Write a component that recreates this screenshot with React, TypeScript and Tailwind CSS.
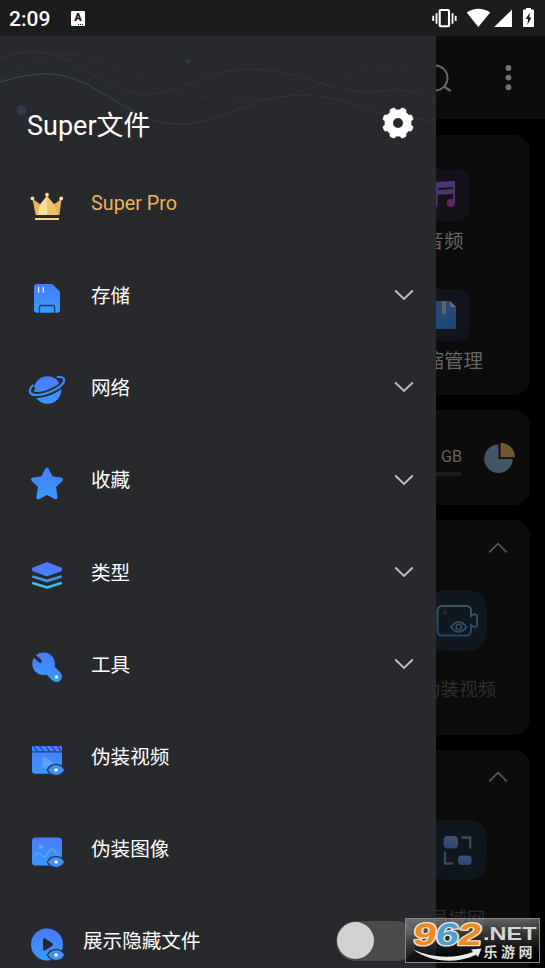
import React from 'react';

type IconName = 'crown' | 'storage' | 'network' | 'star' | 'layers' | 'wrench' | 'video' | 'image' | 'play';

interface MenuItem {
  icon: IconName;
  label: string;
  expandable?: boolean;
  gold?: boolean;
}

const menuItems: MenuItem[] = [
  { icon: 'crown', label: 'Super Pro', gold: true },
  { icon: 'storage', label: '存储', expandable: true },
  { icon: 'network', label: '网络', expandable: true },
  { icon: 'star', label: '收藏', expandable: true },
  { icon: 'layers', label: '类型', expandable: true },
  { icon: 'wrench', label: '工具', expandable: true },
  { icon: 'video', label: '伪装视频' },
  { icon: 'image', label: '伪装图像' },
];

// Small eye badge shared by the "hidden content" icons
const EyeBadge = () => (
  <g>
    <path d="M17.500 28c2.400-4.200 5.600-6.300 9.500-6.300s7.100 2.100 9.500 6.300c-2.400 4.200-5.600 6-9.500 6s-7.100-1.800-9.500-6z" fill="#24304a" />
    <path d="M19 28c2.200-3.300 4.900-4.900 8.100-4.900s5.900 1.600 8.100 4.900c-2.200 3.300-4.900 4.900-8.100 4.900S21.200 31.300 19 28z" fill="#4590f5" />
    <circle cx="27.100" cy="28" r="1.800" fill="#f4faff" />
  </g>
);

const MenuIcon: React.FC<{ name: IconName }> = ({ name }) => {
  const fill = `url(#grad-${name})`;
  return (
    <svg viewBox="0 0 36 36" className="h-9 w-9 shrink-0 overflow-visible">
      <defs>
        <linearGradient id={`grad-${name}`} x1="0" y1="3" x2="0" y2="33" gradientUnits="userSpaceOnUse">
          <stop offset="0" stopColor="#497aff" />
          <stop offset="1" stopColor="#369cff" />
        </linearGradient>
      </defs>
      {name === 'crown' && (
        <g>
          <path d="M3.500 10l7.800 5.300L18 7l7 8.300 7.500-5.300-2 15.200a1 1 0 0 1-1 .8H7.500a1 1 0 0 1-1-.8z" fill="#e8b45a" />
          <path d="M11.300 15.300L18 7v19H8z" fill="#fbdc98" />
          <path d="M18 7l7 8.300L28.500 26H18z" fill="#f1c26c" />
          <circle cx="3.500" cy="9.400" r="1.900" fill="#fbe0a8" />
          <circle cx="18" cy="5.700" r="1.900" fill="#fbe0a8" />
          <circle cx="32.200" cy="9.400" r="1.900" fill="#fbe0a8" />
          <rect x="6" y="29" width="24" height="2" rx=".6" fill="#fbd487" />
        </g>
      )}
      {name === 'storage' && (
        <g>
          <path d="M8 3h15.200L31 10.700v18a3 3 0 0 1-3 3H8a3 3 0 0 1-3-3V6a3 3 0 0 1 3-3z" fill={fill} />
          <path d="M9.600 6.500v4.700M14.300 6.500v4.700" stroke="#e3efff" strokeWidth="1.300" strokeLinecap="round" />
          <path d="M10.500 32v-6.200a1.300 1.300 0 0 1 1.300-1.300h12.500a1.300 1.300 0 0 1 1.300 1.300V32" fill="none" stroke="#203960" strokeWidth="1.300" />
        </g>
      )}
      {name === 'network' && (
        <g>
          <circle cx="18.500" cy="17" r="13.700" fill={fill} />
          <path d="M4.500 13.300C-.5 18 .3 22 7.500 22 19 21.800 35.500 13.500 35 6.800 34.900 4.500 32 4 29 4.600" fill="none" stroke="#28292d" strokeWidth="6" />
          <path d="M3.800 12.500C-1 17.500 0 22 7.300 22 19 21.800 35.600 13.500 35.200 6.800 35 4.300 32 3.400 28.600 4" fill="none" stroke={fill} strokeWidth="2.200" strokeLinecap="round" />
        </g>
      )}
      {name === 'star' && (
        <path
          d="M18 3.500l4.200 8.700 9.700 1.300-7 6.700 1.700 11L18 26.800 9.400 31.200l1.700-11-7-6.700 9.700-1.300z"
          fill={fill}
          stroke={fill}
          strokeWidth="4"
          strokeLinejoin="round"
        />
      )}
      {name === 'layers' && (
        <g strokeLinejoin="round" strokeLinecap="round">
          <path d="M18 5.300l13.700 5.200v1.600L18 17.100 4.300 12.100v-1.600z" fill="#4a7dff" stroke="#4a7dff" strokeWidth="2.400" />
          <path d="M4.300 18.800L18 22.900l13.700-4.100" fill="none" stroke="#4093ee" strokeWidth="2.700" />
          <path d="M4.300 25.200L18 29.500l13.700-4.300" fill="none" stroke="#36c2e8" strokeWidth="2.700" />
        </g>
      )}
      {name === 'wrench' && (
        <g>
          <circle cx="14.600" cy="13.800" r="11.300" fill={fill} />
          <path d="M16 15l11.300 11.500" stroke={fill} strokeWidth="11.200" strokeLinecap="round" />
          <path d="M3.500 4.200l7.800 7" stroke="#28292d" strokeWidth="3.200" strokeLinecap="round" />
          <circle cx="27.600" cy="27" r="1.700" fill="#eef7ff" />
        </g>
      )}
      {name === 'video' && (
        <g>
          <path d="M3 4h30v24.700a3 3 0 0 1-3 3H6a3 3 0 0 1-3-3z" fill={fill} />
          <path d="M3 9.900h30" stroke="#253d70" strokeWidth="1.200" />
          <path d="M4.500 4l4 5.500M10.500 4l4 5.500M16.500 4l4 5.500M22.500 4l4 5.500M28.500 4l4 5.500" stroke="#253d70" strokeWidth="1.200" />
          <path d="M13.500 16.300c0-1.200 1-1.700 2-1.100l7.500 4.400c1 .6 1 1.700 0 2.300l-7.500 4.300c-1 .6-2 0-2-1.100z" fill="#70a5ff" opacity=".8" />
          <EyeBadge />
        </g>
      )}
      {name === 'image' && (
        <g>
          <rect x="3" y="3.500" width="30" height="28" rx="3.500" fill={fill} />
          <circle cx="12" cy="13" r="2.100" fill="#79abff" opacity=".8" />
          <path d="M5.500 22c3-4 5.500-3.200 7.500-.5 2.700 2.500 4.300 1.200 6-2.500 2.500-5.500 5.500-5.500 8 0 1 1.800 2 3.200 4 4" fill="none" stroke="#6ba8fc" strokeWidth="1.200" strokeLinecap="round" />
          <EyeBadge />
        </g>
      )}
      {name === 'play' && (
        <g>
          <circle cx="18" cy="17.400" r="16" fill={fill} />
          <path d="M14 13.100c0-1.700 1.200-2.300 2.500-1.400l6.600 4.400c1.200.8 1.200 2 0 2.800l-6.600 4.300c-1.300.9-2.500.3-2.500-1.400z" fill="#28292d" />
          <EyeBadge />
        </g>
      )}
    </svg>
  );
};

const StatusBar = () => (
  <header className="flex h-9 shrink-0 items-center bg-[#1c1c1d] pl-[9px] pr-2 text-white">
    <span className="w-[62px] pt-0.5 text-[21px] font-medium leading-none">2:09</span>
    <span className="relative flex h-[15px] w-[14px] items-center justify-center rounded-[1px] bg-white pb-px text-[11px] font-black leading-none text-[#1c1c1d]">
      A
      <span className="absolute bottom-px right-0.5 flex gap-px">
        <i className="size-px bg-[#1c1c1d]" />
        <i className="size-px bg-[#1c1c1d]" />
        <i className="size-px bg-[#1c1c1d]" />
      </span>
    </span>
    <svg viewBox="0 0 106 20" className="ml-auto h-5 w-[106px]" fill="#fff">
      <path d="M2.200 7.700v5.300M5.500 5.200v10.500M21.500 5.200v10.500M24.700 7.700v5.300" stroke="#fff" strokeWidth="1.800" />
      <rect x="8.700" y="2" width="9.300" height="16.300" rx="1" fill="none" stroke="#fff" strokeWidth="2.100" />
      <path d="M35.700 4.500Q47.300-3 59.200 4.500L47.300 19zM81 1.500V19H63.200z" />
      <path d="M95 -.5h5v2h2.200a.8.800 0 0 1 .8.800v15.900a.8.800 0 0 1-.8.800h-9.400a.8.800 0 0 1-.8-.8V2.300a.8.800 0 0 1 .8-.8H95z" />
      <path d="M99 4.500l-4.300 6.500h2.400l-.7 6 4-7.500h-2.200z" fill="#1c1c1d" />
    </svg>
  </header>
);

const gearTeeth = [22.5, 67.5, 112.5, 157.5, 202.5, 247.5, 292.5, 337.5];

const DrawerHeader = () => (
  <div className="relative flex h-[121px] shrink-0 items-center justify-between pl-[27px] pr-[22px] pt-[56px]">
    <svg viewBox="0 0 436 121" className="absolute inset-0 h-full w-full" fill="none" strokeWidth="1">
      <defs>
        <linearGradient id="wave" x1="0" x2="436" y1="0" y2="0" gradientUnits="userSpaceOnUse">
          <stop offset="0" stopColor="#323640" />
          <stop offset=".3" stopColor="#30333a" />
          <stop offset="1" stopColor="#323337" />
        </linearGradient>
        <linearGradient id="wave-blue" x1="0" x2="436" y1="0" y2="0" gradientUnits="userSpaceOnUse">
          <stop offset="0" stopColor="#314e65" />
          <stop offset=".25" stopColor="#32465a" />
          <stop offset=".45" stopColor="#34373e" />
          <stop offset="1" stopColor="#303135" />
        </linearGradient>
      </defs>
      <path d="M0 21C35 12 56 16 82 32C112 50 125 58 145 58.500C185 58.500 200 33 250 33.500C300 34 330 56 370 56C390 55 405 49 436 63" stroke="url(#wave)" />
      <path d="M0 44C50 8 86 16 128 35C175 56 190 64 250 64C310 65 320 32 400 32Q423 33 436 41" stroke="url(#wave)" opacity=".65" />
      <path d="M0 46C46 32 68 37 97 54C127 70 144 88 181 88C220 88 250 60 300 59C350 59 378 84 436 84" stroke="url(#wave-blue)" />
      <circle cx="21.500" cy="74" r="4.800" fill="#303b50" />
      <circle cx="187.500" cy="25.300" r="2.500" fill="#2c3641" />
    </svg>
    <h1 className="relative pt-1 text-[27px] leading-none text-white">Super文件</h1>
    <svg viewBox="0 0 32 32" className="relative -mt-1 h-8 w-8" fill="#fff">
      <circle cx="16" cy="16" r="9.200" fill="none" stroke="#fff" strokeWidth="8.400" />
      {gearTeeth.map((angle) => (
        <path
          key={angle}
          d="M12.500 4.500L13.400 1.200Q13.800.5 14.500.5h3q.7 0 1.100.7l.9 3.300z"
          stroke="#fff"
          strokeWidth=".6"
          transform={`rotate(${angle} 16 16)`}
        />
      ))}
    </svg>
  </div>
);

const Chevron = () => (
  <svg viewBox="0 0 20 12" className="ml-auto h-3 w-5" fill="none" stroke="#bebebf" strokeWidth="1.900">
    <path d="M1.200 1.500L10 10l8.800-8.500" />
  </svg>
);

const CollapseIcon = () => (
  <svg viewBox="0 0 20 12" className="ml-[52px] h-3 w-5" fill="none" stroke="#5a5a5a" strokeWidth="1.700">
    <path d="M1.200 10.400L10 1.700l8.800 8.700" />
  </svg>
);

const DrawerRow: React.FC<{ item: MenuItem }> = ({ item }) => (
  <li className="relative flex h-[92.200px] items-center pl-[29px] pr-[22px]">
    <span className="pt-2">
      <MenuIcon name={item.icon} />
    </span>
    <span
      className={
        item.gold
          ? 'ml-[26px] pt-[2px] text-[19.800px] text-[#e9b45c]'
          : 'ml-[26px] pt-[3px] text-[19.600px] text-white'
      }
    >
      {item.label}
    </span>
    {item.expandable && <Chevron />}
    <i className="absolute -bottom-px left-[25px] h-px w-[385px] bg-[#2e2e30]" />
  </li>
);

const Drawer = () => (
  <aside className="flex w-[436px] shrink-0 flex-col overflow-hidden bg-[#28292d]">
    <DrawerHeader />
    <ul>
      {menuItems.map((item) => (
        <DrawerRow key={item.label} item={item} />
      ))}
    </ul>
    <div className="flex h-[92.200px] shrink-0 items-center pl-[29px] pr-5">
      <span className="pt-2">
        <MenuIcon name="play" />
      </span>
      <span className="ml-[18px] pt-[3px] text-[19.600px] text-white">展示隐藏文件</span>
      <span className="ml-auto flex h-10 w-20 items-center rounded-full bg-[#4a4a4b] pl-px">
        <i className="size-[37px] rounded-full bg-[#d2d2d2]" />
      </span>
    </div>
  </aside>
);

// The file manager home, dimmed behind the open drawer
const HomePage = () => (
  <main className="flex w-[109px] shrink-0 flex-col overflow-hidden bg-black">
    <div className="flex h-[83px] shrink-0 items-center bg-[#0c0c0c]">
      <svg viewBox="0 0 109 83" className="h-[83px] w-[109px]" fill="none">
        <circle cx="-1" cy="42" r="12.500" stroke="#686868" strokeWidth="2" />
        <path d="M7.500 50l7 5" stroke="#686868" strokeWidth="2.300" />
        <circle cx="72.500" cy="32" r="2.900" fill="#747474" />
        <circle cx="72.500" cy="41.600" r="2.900" fill="#747474" />
        <circle cx="72.500" cy="51.200" r="2.900" fill="#747474" />
      </svg>
    </div>

    <section className="mt-4 h-[260px] w-[94px] shrink-0 rounded-r-[16px] bg-[#0c0c0c] pt-[34px]">
      <div className="-ml-[52px] flex w-[120px] flex-col items-center text-[19.500px] leading-none text-[#666]">
        <div className="size-[52px] rounded-xl bg-[#15111b]">
          <svg viewBox="0 0 52 52" className="h-full w-full">
            <defs>
              <linearGradient id="music" x1="0" y1="12" x2="0" y2="38" gradientUnits="userSpaceOnUse">
                <stop offset="0" stopColor="#443a74" />
                <stop offset="1" stopColor="#632766" />
              </linearGradient>
            </defs>
            <path d="M17 14.200Q17 13 18.200 12.900L36 12q1 0 1 1v21h-2V25l-15.500.8V37H17zM20.500 19v2l14.500-1v-2z" fill="url(#music)" fillRule="evenodd" />
            <circle cx="32.800" cy="34" r="4" fill="#632766" />
            <circle cx="15" cy="36" r="4" fill="#632766" />
          </svg>
        </div>
        <span className="mt-[11px]">音频</span>
        <div className="mt-[37px] size-[52px] rounded-xl bg-[#11161c]">
          <svg viewBox="0 0 52 52" className="h-full w-full">
            <defs>
              <linearGradient id="zip" x1="0" y1="12" x2="0" y2="40" gradientUnits="userSpaceOnUse">
                <stop offset="0" stopColor="#304675" />
                <stop offset="1" stopColor="#184a7c" />
              </linearGradient>
            </defs>
            <path d="M15 12h17l6 6v20a2 2 0 0 1-2 2H15z" fill="url(#zip)" />
            <path d="M32 12l6 6h-4a2 2 0 0 1-2-2z" fill="#626d83" />
            <path d="M26 12v13" stroke="#66676b" strokeWidth="3.800" strokeDasharray="2 .3" />
          </svg>
        </div>
        <span className="mt-[11px] whitespace-nowrap">压缩管理</span>
      </div>
    </section>

    <section className="mt-[15px] flex h-[95px] w-[94px] shrink-0 items-center rounded-r-[16px] bg-[#0c0c0c]">
      <div className="w-[26px] pt-1.5 text-right">
        <span className="block origin-right scale-x-95 text-[17px] leading-5 text-[#646464]">GB</span>
        <i className="mt-[6px] block h-1 rounded-r-full bg-[#1c1c1c]" />
      </div>
      <svg viewBox="0 0 32 32" className="ml-[22px] size-8">
        <path d="M14.500 2.500A14.300 14.300 0 1 0 28.800 17H14.500z" fill="#435463" />
        <path d="M16.500 .7a14.500 14.500 0 0 1 14.500 14.500H16.500z" fill="#705932" />
      </svg>
    </section>

    <section className="mt-[15px] h-[215px] w-[94px] shrink-0 rounded-r-[16px] bg-[#0c0c0c] pt-[22px]">
      <CollapseIcon />
      <div className="-ml-[39px] mt-9 flex w-[120px] flex-col items-center text-[18.600px] leading-none text-[#2e2e2e]">
        <div className="h-[61px] w-[60px] rounded-[18px] bg-[#10171f]">
          <svg viewBox="0 0 60 61" className="h-full w-full" fill="none">
            <defs>
              <linearGradient id="camera" x1="0" y1="15" x2="0" y2="46" gradientUnits="userSpaceOnUse">
                <stop offset="0" stopColor="#3c5857" />
                <stop offset="1" stopColor="#25436d" />
              </linearGradient>
            </defs>
            <path d="M15 16h24.500a4.500 4.500 0 0 1 4.500 4.500v5.500l2.500-1.700q3.500-.5 3.500 2v8.500q0 2.500-3.500 2l-2.500-1.800v6a4.500 4.500 0 0 1-4.500 4.500H15a4.500 4.500 0 0 1-4.500-4.500V20.500A4.500 4.500 0 0 1 15 16z" stroke="url(#camera)" strokeWidth="2" />
            <path d="M24 37q7.800-10 15.600 0-7.800 10-15.600 0z" stroke="#315365" strokeWidth="1.700" />
            <circle cx="31.800" cy="37" r="2.700" stroke="#315365" strokeWidth="1.600" />
            <circle cx="17.800" cy="22.500" r="2" fill="#1e2c32" />
          </svg>
        </div>
        <span className="ml-1 mt-[30px] whitespace-nowrap">伪装视频</span>
      </div>
    </section>

    <section className="mt-[15px] h-[240px] w-[94px] shrink-0 rounded-r-[16px] bg-[#0c0c0c] pt-[21px]">
      <CollapseIcon />
      <div className="-ml-[39px] mt-[37px] flex w-[120px] flex-col items-center text-[18.600px] leading-none text-[#2e2e2e]">
        <div className="size-[60px] rounded-[18px] bg-[#10161e]">
          <svg viewBox="0 0 60 60" className="h-full w-full" fill="none">
            <defs>
              <linearGradient id="lan" x1="0" y1="0" x2="0" y2="1">
                <stop offset="0" stopColor="#42516c" />
                <stop offset="1" stopColor="#284579" />
              </linearGradient>
            </defs>
            <rect x="16.700" y="16" width="14.300" height="12.500" rx="4" fill="url(#lan)" />
            <rect x="31" y="35.500" width="13.500" height="9.500" rx="3.500" fill="url(#lan)" />
            <path d="M34.500 17.500h8.700v11" stroke="#3a4759" strokeWidth="2.300" />
            <path d="M18 31.500v12h8" stroke="#3a4759" strokeWidth="2.300" />
          </svg>
        </div>
        <span className="ml-px mt-[30px]">局域网</span>
      </div>
    </section>
  </main>
);

const Watermark = () => (
  <div className="absolute left-[405px] top-[918px] h-[45px] w-[135px] border border-[#858688] bg-linear-to-b from-white/35 to-black/60">
    <svg viewBox="0 0 133 43" className="absolute inset-0 h-full w-full">
      <path d="M7 30.500c20 9 42 9.500 60 2.500l-2-2.500 10.500-1-3.500 8.500-2-2.300c-20 9.500-45 7.800-63-5.200z" fill="#ececec" />
      <g
        fontFamily="Liberation Sans, sans-serif"
        fontWeight="700"
        fontSize="31"
        strokeLinejoin="round"
        stroke="#f4e6d5"
        strokeWidth="2.600"
        paintOrder="stroke"
        transform="translate(4 0) skewX(-8)"
      >
        <text x="6" y="26.300" textLength="23" lengthAdjust="spacingAndGlyphs" fill="#ee8a20">9</text>
        <text x="28.500" y="26.300" textLength="23" lengthAdjust="spacingAndGlyphs" fill="#4c9fd3">6</text>
        <text x="51" y="26.300" textLength="23" lengthAdjust="spacingAndGlyphs" fill="#ee8a20">2</text>
      </g>
      <text x="77" y="21" textLength="53.500" lengthAdjust="spacingAndGlyphs" fontFamily="Liberation Sans, sans-serif" fontWeight="700" fontSize="17.500" fill="#d6d6d6">
        .NET
      </text>
      <text x="77.500" y="38.300" textLength="49" fontFamily="Noto Sans CJK SC, sans-serif" fontWeight="700" fontSize="14" fill="#dcdcdc">
        乐游网
      </text>
    </svg>
  </div>
);

export default function App() {
  return (
    <div className="relative flex h-[968px] w-[545px] flex-col overflow-hidden bg-black font-['Roboto','Noto_Sans_CJK_SC',sans-serif]">
      <StatusBar />
      <div className="flex min-h-0 flex-1">
        <Drawer />
        <HomePage />
      </div>
      <Watermark />
    </div>
  );
}
